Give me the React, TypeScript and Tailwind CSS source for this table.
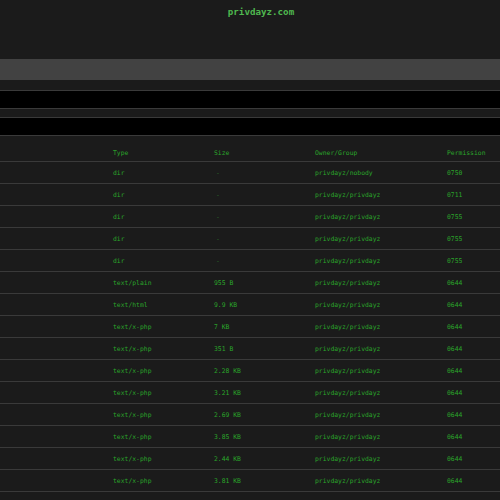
import React from "react";

const rows: [string, string, string, string][] = [
  ["dir", "-", "privdayz/nobody", "0750"],
  ["dir", "-", "privdayz/privdayz", "0711"],
  ["dir", "-", "privdayz/privdayz", "0755"],
  ["dir", "-", "privdayz/privdayz", "0755"],
  ["dir", "-", "privdayz/privdayz", "0755"],
  ["text/plain", "955 B", "privdayz/privdayz", "0644"],
  ["text/html", "9.9 KB", "privdayz/privdayz", "0644"],
  ["text/x-php", "7 KB", "privdayz/privdayz", "0644"],
  ["text/x-php", "351 B", "privdayz/privdayz", "0644"],
  ["text/x-php", "2.28 KB", "privdayz/privdayz", "0644"],
  ["text/x-php", "3.21 KB", "privdayz/privdayz", "0644"],
  ["text/x-php", "2.69 KB", "privdayz/privdayz", "0644"],
  ["text/x-php", "3.85 KB", "privdayz/privdayz", "0644"],
  ["text/x-php", "2.44 KB", "privdayz/privdayz", "0644"],
  ["text/x-php", "3.81 KB", "privdayz/privdayz", "0644"],
  ["text/x-php", "15.75 KB", "privdayz/privdayz", "0644"],
];

const mono = { fontFamily: '"DejaVu Sans Mono", "Liberation Mono", monospace' };

export default function App() {
  return (
    <div className="w-[500px] h-[500px] overflow-hidden bg-[#1b1b1b]" style={mono}>
      <div className="h-[59px] pt-[6px] pl-[22px] text-center text-[9.2px] font-bold text-[#4fb84f] leading-[12px]">
        privdayz.com
      </div>
      <div className="h-[21px] bg-[#424242]" />
      <div className="h-[10px]" />
      <div className="h-[1px] bg-[#3a3a3a]" />
      <div className="h-[17px] bg-black" />
      <div className="h-[1px] bg-[#3a3a3a]" />
      <div className="h-[8px]" />
      <div className="h-[1px] bg-[#3a3a3a]" />
      <div className="h-[17px] bg-black" />
      <div className="h-[1px] bg-[#3a3a3a]" />
      <div className="grid grid-cols-[113px_101px_101px_132px_1fr] h-[26px] items-end pb-[4px] border-b border-[#3a3a3a] text-[6.4px] leading-[8px] text-[#2aa52a]">
        <div />
        <div>Type</div>
        <div>Size</div>
        <div>Owner/Group</div>
        <div>Permission</div>
      </div>
      {rows.map((r, i) => (
        <div
          key={i}
          className="grid grid-cols-[113px_101px_101px_132px_1fr] h-[22px] items-center border-b border-[#3a3a3a] text-[6.4px] leading-[8px] text-[#2aa52a]"
        >
          <div />
          <div>{r[0]}</div>
          <div className={r[1] === "-" ? "pl-[2px] text-[#2a6f2a]" : ""}>{r[1]}</div>
          <div>{r[2]}</div>
          <div>{r[3]}</div>
        </div>
      ))}
    </div>
  );
}
